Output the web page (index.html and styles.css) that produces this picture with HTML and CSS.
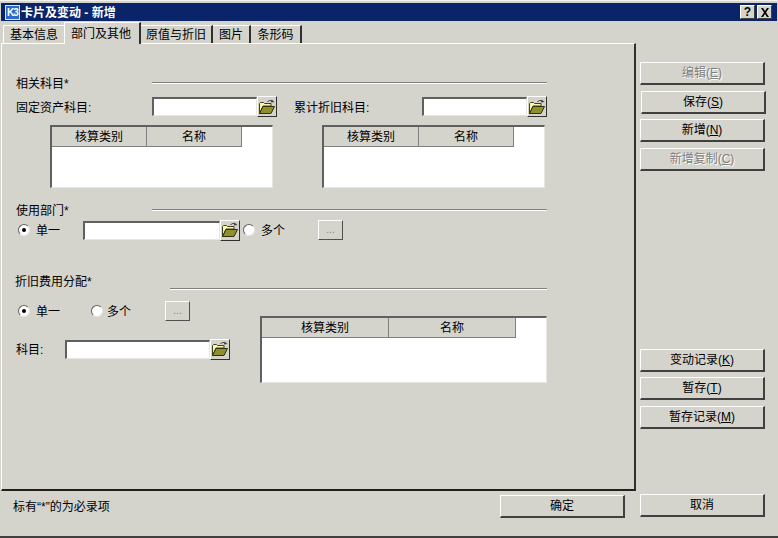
FILE: index.html
```html
<!DOCTYPE html>
<html>

<head>
    <meta charset="UTF-8">
    <title>卡片及变动 - 新增</title>
    <link rel="stylesheet" href="styles.css">
</head>

<body>
<div class="window">
    <div class="titlebar">
        <span class="logo">K3</span>
        <span class="title">卡片及变动 - 新增</span>
        <span class="capbtn capbtn-help">?</span>
        <span class="capbtn capbtn-close">
            <svg width="10" height="9" viewBox="0 0 10 9"><path d="M1 0h2l2 3 2-3h2L6 4.500 9 9H7L5 6 3 9H1l3-4.500z" fill="#000"/></svg>
        </span>
    </div>

    <div class="main">
        <div class="left">
            <div class="tabs">
                <a class="tab tab-first">基本信息</a>
                <a class="tab tab-active">部门及其他</a>
                <a class="tab tab-value">原值与折旧</a>
                <a class="tab tab-pic">图片</a>
                <a class="tab tab-code">条形码</a>
            </div>
            <div class="panel">
                <div class="heading">
                    <span class="heading-text">相关科目*</span>
                    <span class="rule"></span>
                </div>
                <div class="row row-accounts">
                    <span class="lbl lbl-fixed">固定资产科目:</span>
                    <span class="field field-short"></span>
                    <span class="folder"><svg width="18" height="16" viewBox="0 0 18 16"><use href="#folder-icon"/></svg></span>
                    <span class="lbl lbl-total">累计折旧科目:</span>
                    <span class="field field-short"></span>
                    <span class="folder"><svg width="18" height="16" viewBox="0 0 18 16"><use href="#folder-icon"/></svg></span>
                </div>
                <div class="row row-grids">
                    <div class="grid grid-a">
                        <div class="grid-head">
                            <span class="col col-a">核算类别</span>
                            <span class="col col-a">名称</span>
                        </div>
                    </div>
                    <div class="grid grid-a grid-second">
                        <div class="grid-head">
                            <span class="col col-a">核算类别</span>
                            <span class="col col-a">名称</span>
                        </div>
                    </div>
                </div>

                <div class="heading heading-dept">
                    <span class="heading-text">使用部门*</span>
                    <span class="rule"></span>
                </div>
                <div class="row row-dept">
                    <span class="radio radio-on"></span>
                    <span class="lbl lbl-single">单一</span>
                    <span class="field field-dept"></span>
                    <span class="folder"><svg width="18" height="16" viewBox="0 0 18 16"><use href="#folder-icon"/></svg></span>
                    <span class="radio radio-many"></span>
                    <span class="lbl lbl-many">多个</span>
                    <span class="more">...</span>
                </div>

                <div class="heading heading-dep">
                    <span class="heading-text heading-text-dep">折旧费用分配*</span>
                    <span class="rule rule-dep"></span>
                </div>
                <div class="row row-dep">
                    <div class="dep-left">
                        <div class="row row-dep-radio">
                            <span class="radio radio-on"></span>
                            <span class="lbl lbl-single2">单一</span>
                            <span class="radio"></span>
                            <span class="lbl lbl-many2">多个</span>
                            <span class="more">...</span>
                        </div>
                        <div class="row row-subject">
                            <span class="lbl lbl-subject">科目:</span>
                            <span class="field field-subject"></span>
                            <span class="folder"><svg width="18" height="16" viewBox="0 0 18 16"><use href="#folder-icon"/></svg></span>
                        </div>
                    </div>
                    <div class="grid grid-b">
                        <div class="grid-head">
                            <span class="col col-b">核算类别</span>
                            <span class="col col-b">名称</span>
                        </div>
                    </div>
                </div>
            </div>
        </div>

        <div class="side">
            <a class="btn btn-off">编辑(<u>E</u>)</a>
            <a class="btn btn-save">保存(<u>S</u>)</a>
            <a class="btn btn-new">新增(<u>N</u>)</a>
            <a class="btn btn-off btn-copy">新增复制(<u>C</u>)</a>
            <a class="btn btn-change">变动记录(<u>K</u>)</a>
            <a class="btn btn-temp">暂存(<u>T</u>)</a>
            <a class="btn btn-temprec">暂存记录(<u>M</u>)</a>
        </div>
    </div>

    <div class="footer">
        <span class="note">标有“*”的为必录项</span>
        <a class="btn btn-ok">确定</a>
        <a class="btn btn-cancel">取消</a>
    </div>
</div>

<svg class="defs" width="0" height="0">
    <symbol id="folder-icon" viewBox="0 0 18 16">
        <path d="M9.500 3c1-1.800 3.500-2 5-.5" fill="none" stroke="#404040" stroke-width="1"/>
        <path d="M13.500 .5l3 2.500-3.500 .5z" fill="#404040"/>
        <path d="M1.500 14.500V4.500l1-1h3l1 1h6.500v2.500H5L1.500 14.500z" fill="#fbf7a8" stroke="#404020" stroke-width="1"/>
        <path d="M1.500 14.500L5 7.500h11.500L13 14.500z" fill="#8f8f2c" stroke="#303010" stroke-width="1"/>
    </symbol>
</svg>
</body>

</html>
```

FILE: styles.css
```css
* {
    padding: 0;
    margin: 0;
    box-sizing: border-box;
}

body {
    width: 778px;
    height: 538px;
    overflow: hidden;
    background: #d4d3cc;
    color: #000;
    font-family: "Liberation Sans", "Noto Sans CJK SC", sans-serif;
    font-size: 12px;
    line-height: 14px;
}

.defs {
    display: block;
    height: 0;
}

.window {
    width: 778px;
    height: 538px;
    padding: 3px 1px 0 1px;
    border-top: 1px solid #f4f2ee;
    border-bottom: 2px solid #404040;
    display: flex;
    flex-direction: column;
}

/* title bar */
.titlebar {
    height: 18px;
    margin-top: -1px;
    background: #0a246a;
    display: flex;
    align-items: center;
    padding: 0 4px 0 4px;
    flex-shrink: 0;
}

.logo {
    width: 15px;
    height: 15px;
    background: #2a6cc4;
    border: 1px solid #d8e4f4;
    color: #fff;
    font-size: 10px;
    font-weight: bold;
    line-height: 13px;
    text-align: center;
    letter-spacing: -1px;
}

.title {
    margin-left: 1px;
    padding-top: 2px;
    color: #fff;
    font-weight: bold;
}

.capbtn {
    width: 15px;
    height: 14px;
    background: #d4d3cc;
    border-top: 1px solid #fff;
    border-left: 1px solid #fff;
    border-right: 1px solid #404040;
    border-bottom: 1px solid #404040;
    display: flex;
    align-items: center;
    justify-content: center;
}

.capbtn-help {
    margin-left: auto;
    font-weight: bold;
    font-size: 12px;
}

.capbtn-close {
    margin-left: 2px;
    margin-right: 1px;
}

/* main area */
.main {
    display: flex;
    margin-top: 1px;
}

.left {
    width: 635px;
    flex-shrink: 0;
}

.tabs {
    height: 22px;
    display: flex;
    align-items: flex-end;
    padding-left: 2px;
    position: relative;
    z-index: 1;
}

.tab {
    height: 18px;
    text-align: center;
    line-height: 19px;
    border-top: 1px solid #fff;
    border-left: 1px solid #fff;
    border-right: 2px solid #303030;
}

.tab-first {
    width: 61px;
    border-right: 0;
    margin-bottom: 1px;
}

.tab-active {
    width: 77px;
    height: 22px;
    padding-right: 2px;
    line-height: 23px;
    background: #d4d3cc;
}

.tab-value {
    width: 72px;
    margin-bottom: 1px;
    border-left: 0;
}

.tab-pic {
    width: 38px;
    margin-bottom: 1px;
    border-left: 0;
}

.tab-code {
    width: 51px;
    margin-bottom: 1px;
    border-left: 0;
}

.panel {
    height: 448px;
    margin-top: -1px;
    padding: 32px 0 0 14px;
    border-top: 1px solid #fff;
    border-left: 1px solid #fff;
    border-right: 2px solid #303030;
    border-bottom: 2px solid #202020;
}

/* group headings */
.heading {
    width: 531px;
    height: 14px;
    display: flex;
}

.heading-text {
    width: 136px;
    padding-top: 1px;
    flex-shrink: 0;
}

.rule {
    flex: 1;
    height: 2px;
    margin-top: 6px;
    border-top: 1px solid #808080;
    border-bottom: 1px solid #fff;
}

.heading-dept {
    margin-top: 15px;
}

.heading-dep {
    margin-top: 34px;
    height: 16px;
}

.heading-text-dep {
    width: 154px;
    margin-left: -1px;
    margin-right: 1px;
}

.rule-dep {
    margin-top: 14px;
}

/* rows */
.row {
    display: flex;
    align-items: center;
}

.row-accounts {
    height: 21px;
    margin-top: 6px;
}

.row-grids {
    margin-top: 8px;
    align-items: flex-start;
}

.row-dept {
    height: 20px;
    margin-top: 3px;
    padding-left: 2px;
}

.row-dep {
    margin-top: 11px;
    align-items: flex-start;
}

.dep-left {
    width: 244px;
}

.row-dep-radio {
    height: 20px;
    padding-left: 2px;
}

.row-subject {
    height: 20px;
    margin-top: 18px;
}

.lbl {
    padding-top: 2px;
    flex-shrink: 0;
}

.lbl-fixed { width: 136px; }
.lbl-total { width: 128px; margin-left: 17px; }
.lbl-single { width: 47px; margin-left: 6px; }
.lbl-many { width: 57px; margin-left: 6px; }
.lbl-single2 { width: 55px; margin-left: 6px; }
.lbl-many2 { width: 58px; margin-left: 4px; }
.lbl-subject { width: 49px; }

/* inputs */
.field {
    height: 19px;
    background: #fff;
    border-top: 2px solid #606060;
    border-left: 2px solid #606060;
    border-right: 1px solid #e8e6e0;
    border-bottom: 1px solid #e8e6e0;
    flex-shrink: 0;
}

.field-short { width: 105px; }
.field-dept { width: 137px; }
.field-subject { width: 145px; }

.folder {
    width: 20px;
    height: 21px;
    flex-shrink: 0;
    border-top: 1px solid #fff;
    border-left: 1px solid #fff;
    border-right: 1px solid #303030;
    border-bottom: 1px solid #303030;
    display: flex;
    align-items: center;
    justify-content: center;
}

.radio {
    width: 12px;
    height: 12px;
    border-radius: 50%;
    background: #fff;
    border: 1px solid;
    border-color: #606060 #e8e6e0 #e8e6e0 #606060;
    flex-shrink: 0;
    display: flex;
    align-items: center;
    justify-content: center;
}

.radio-on::after {
    content: "";
    width: 4px;
    height: 4px;
    border-radius: 50%;
    background: #000;
}

.radio-many {
    margin-left: 3px;
}

.more {
    width: 25px;
    height: 20px;
    color: #808080;
    text-align: center;
    line-height: 18px;
    font-size: 10px;
    border-top: 1px solid #fff;
    border-left: 1px solid #fff;
    border-right: 1px solid #505050;
    border-bottom: 1px solid #505050;
    flex-shrink: 0;
}

/* grids */
.grid {
    background: #fff;
    border-top: 2px solid #606060;
    border-left: 2px solid #606060;
    border-right: 1px solid #e8e6e0;
    border-bottom: 1px solid #e8e6e0;
    flex-shrink: 0;
}

.grid-a {
    width: 223px;
    height: 63px;
    margin-left: 34px;
}

.grid-second {
    margin-left: 49px;
}

.grid-b {
    width: 287px;
    height: 67px;
    margin-top: 15px;
}

.grid-head {
    display: flex;
    height: 20px;
}

.col {
    background: #d4d3cc;
    text-align: center;
    line-height: 20px;
    border-right: 1px solid #808080;
    border-bottom: 1px solid #808080;
}

.col-a { width: 95px; }
.col-b { width: 127px; }

/* side buttons */
.side {
    width: 137px;
    flex-shrink: 0;
    margin-left: 4px;
    padding-top: 40px;
    display: flex;
    flex-direction: column;
    align-items: flex-start;
}

.btn {
    display: block;
    width: 125px;
    height: 23px;
    background: #d4d3cc;
    text-align: center;
    line-height: 20px;
    border-top: 1px solid #fff;
    border-left: 1px solid #fff;
    border-right: 2px solid #404040;
    border-bottom: 2px solid #404040;
}

.btn-off {
    color: #808080;
    text-shadow: 1px 1px 0 #fff;
}

.btn-save { margin: 6px 0 0 1px; }
.btn-new { margin-top: 5px; }
.btn-copy { margin-top: 6px; }
.btn-change { margin-top: 178px; }
.btn-temp { margin-top: 5px; }
.btn-temprec { margin-top: 6px; }

/* footer */
.footer {
    display: flex;
    align-items: flex-start;
    padding-top: 3px;
}

.note {
    width: 499px;
    margin-top: 6px;
    padding-left: 12px;
}

.btn-ok {
    margin-top: 1px;
}

.btn-cancel {
    margin-left: 15px;
}
```
